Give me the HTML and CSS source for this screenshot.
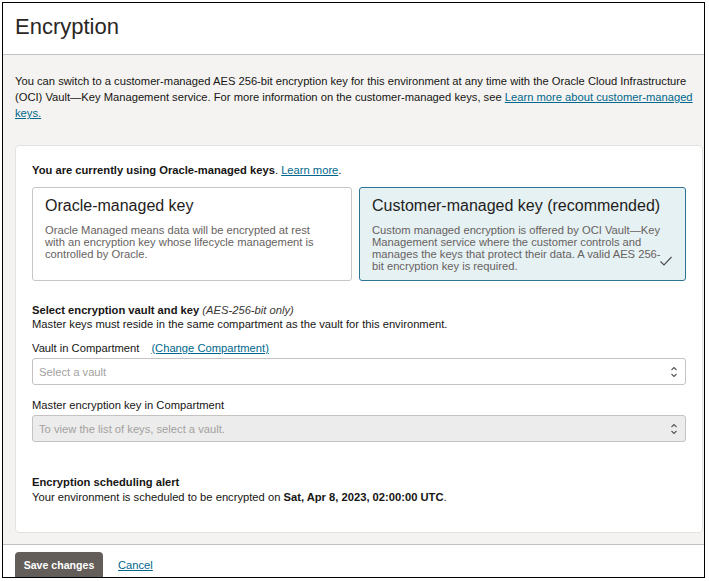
FILE: index.html
```html
<!DOCTYPE html>
<html lang="en">
<head>
<meta charset="utf-8">
<title>Encryption</title>
<link rel="stylesheet" href="styles.css">
</head>
<body>
<div class="frame">
  <header class="header">
    <h1 class="title">Encryption</h1>
  </header>
  <div class="rule"></div>
  <main class="body">
    <p class="intro">You can switch to a customer-managed AES 256-bit encryption key for this environment at any time with the Oracle Cloud Infrastructure (OCI) Vault—Key Management service. For more information on the customer-managed keys, see <a href="#" class="link">Learn more about customer-managed keys.</a></p>
    <section class="card">
      <p class="current"><strong>You are currently using Oracle-managed keys</strong>. <a href="#" class="link">Learn more</a>.</p>
      <div class="choices">
        <div class="choice">
          <div class="choice-title">Oracle-managed key</div>
          <div class="choice-desc">Oracle Managed means data will be encrypted at rest with an encryption key whose lifecycle management is controlled by Oracle.</div>
        </div>
        <div class="choice selected">
          <div class="choice-title">Customer-managed key (recommended)</div>
          <div class="choice-desc">Custom managed encryption is offered by OCI Vault—Key Management service where the customer controls and manages the keys that protect their data. A valid AES 256-bit encryption key is required.</div>
          <svg class="check" width="14" height="12" viewBox="0 0 14 12"><path d="M1.5 6.5 L5 10 L12.5 2" fill="none" stroke="#4a4a4a" stroke-width="1.1"/></svg>
        </div>
      </div>
      <div class="section-head">
        <div><strong>Select encryption vault and key</strong> <em class="hint">(AES-256-bit only)</em></div>
        <div>Master keys must reside in the same compartment as the vault for this environment.</div>
      </div>
      <div class="field">
        <div class="label">Vault in <span class="semi">Compartment</span><a href="#" class="link change">(Change Compartment)</a></div>
        <div class="select">
          <span class="placeholder">Select a vault</span>
          <svg class="arrows" width="8" height="12" viewBox="0 0 8 12"><path d="M1.5 4 L4 1.5 L6.5 4 M1.5 8 L4 10.5 L6.5 8" fill="none" stroke="#555" stroke-width="1.1"/></svg>
        </div>
      </div>
      <div class="field second">
        <div class="label">Master encryption key in <span class="semi">Compartment</span></div>
        <div class="select disabled">
          <span class="placeholder">To view the list of keys, select a vault.</span>
          <svg class="arrows" width="8" height="12" viewBox="0 0 8 12"><path d="M1.5 4 L4 1.5 L6.5 4 M1.5 8 L4 10.5 L6.5 8" fill="none" stroke="#555" stroke-width="1.1"/></svg>
        </div>
      </div>
      <div class="alert">
        <div><strong>Encryption scheduling alert</strong></div>
        <div>Your environment is scheduled to be encrypted on <strong>Sat, Apr 8, 2023, 02:00:00 UTC</strong>.</div>
      </div>
    </section>
  </main>
  <div class="rule"></div>
  <footer class="footer">
    <button class="btn-primary" type="button">Save changes</button>
    <a href="#" class="link cancel">Cancel</a>
  </footer>
</div>
</body>
</html>
```

FILE: styles.css
```css
* { box-sizing: border-box; }
html, body { margin: 0; padding: 0; background: #fff; }
body {
  padding: 2px;
  font-family: "Liberation Sans", Arial, sans-serif;
  font-size: 11.2px;
  color: #161513;
}
.frame {
  width: 703px;
  height: 576px;
  border: 1px solid #000;
  overflow: hidden;
  display: flex;
  flex-direction: column;
  background: #fff;
}
.header {
  height: 51px;
  padding: 0 12px 4px 12px;
  display: flex;
  align-items: center;
  flex: none;
}
.title {
  margin: 0;
  font-size: 22px;
  font-weight: normal;
  color: #2a2724;
}
.rule {
  height: 1px;
  background: #c2c1bf;
  margin: 0 -5px 0 -3px;
  flex: none;
}
.body {
  background: #f4f3f1;
  padding: 18px 1px 12px 12px;
  flex: none;
  height: 489px;
}
.intro {
  margin: 0;
  line-height: 16px;
  padding-right: 8px;
}
.link {
  color: #00688c;
  text-decoration: underline;
}
.card {
  margin-top: 24px;
  background: #fff;
  border: 1px solid #e3e2e0;
  border-radius: 4px;
  padding: 16px 16px 27px 16px;
}
.current {
  margin: 0;
  line-height: 16px;
}
.choices {
  margin-top: 9px;
  display: grid;
  grid-template-columns: 320px 1fr;
  gap: 7px;
}
.choice {
  position: relative;
  border: 1px solid #c8c6c3;
  border-radius: 3px;
  padding: 8px 20px 8px 12px;
  background: #fff;
}
.choice.selected {
  background: #e6f1f4;
  border-color: #2b7592;
}
.choice-title {
  font-size: 16px;
  line-height: 20px;
  color: #1f1d1b;
  margin-bottom: 8px;
  white-space: nowrap;
}
.choice-desc {
  color: #66625e;
  line-height: 12px;
  font-size: 11.2px;
}
.check {
  position: absolute;
  right: 12px;
  bottom: 13px;
}
.section-head {
  margin-top: 22px;
  line-height: 14px;
}
.hint {
  color: #3a3734;
}
.field {
  margin-top: 9px;
}
.field.second {
  margin-top: 12px;
}
.label {
  line-height: 16px;
  margin-bottom: 2px;
}
.semi { font-weight: normal; }
.change {
  margin-left: 12px;
}
.select {
  height: 27px;
  border: 1px solid #c4c3c1;
  border-radius: 3px;
  background: #fff;
  display: flex;
  align-items: center;
  justify-content: space-between;
  padding: 0 7px 0 6px;
}
.select.disabled {
  background: #ececec;
}
.placeholder {
  color: #a3a19e;
}
.alert {
  margin-top: 33px;
  line-height: 15px;
}
.footer {
  padding: 7px 12px 0 12px;
  display: flex;
  align-items: flex-start;
  gap: 15px;
  flex: none;
}
.btn-primary {
  font-family: "Liberation Sans", Arial, sans-serif;
  font-size: 10.6px;
  font-weight: bold;
  color: #fff;
  background: #645e5a;
  border: none;
  border-radius: 4px;
  width: 88px;
  height: 30px;
  padding: 0 0 4px 0;
  line-height: 26px;
  text-align: center;
}
.cancel {
  line-height: 26px;
}
```
